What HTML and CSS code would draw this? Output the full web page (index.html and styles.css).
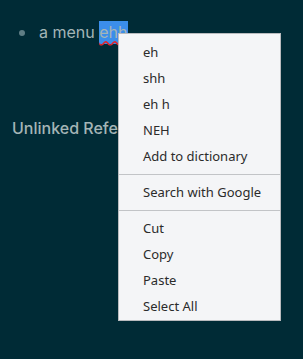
FILE: index.html
```html
<!DOCTYPE html>
<html>
<head>
<meta charset="utf-8">
<link rel="stylesheet" href="styles.css">
</head>
<body>
<div class="page">
  <ul class="blocks">
    <li class="block"><span class="bullet"></span><span class="content">a menu <span class="sel">ehh</span></span></li>
  </ul>
  <h2 class="refs">Unlinked References</h2>
</div>
<div class="menu">
  <div class="item">eh</div>
  <div class="item">shh</div>
  <div class="item">eh h</div>
  <div class="item">NEH</div>
  <div class="item">Add to dictionary</div>
  <div class="sep"></div>
  <div class="item">Search with Google</div>
  <div class="sep"></div>
  <div class="item">Cut</div>
  <div class="item">Copy</div>
  <div class="item">Paste</div>
  <div class="item">Select All</div>
</div>
</body>
</html>
```
FILE: styles.css
```css
html, body {
  margin: 0;
  padding: 0;
  background: #002b36;
  height: 100%;
  overflow: hidden;
}
.page {
  font-family: Inter, "Noto Sans", sans-serif;
  color: #a4b5b6;
  padding: 21px 0 0 12px;
}
.blocks {
  list-style: none;
  margin: 0;
  padding: 0;
}
.block {
  display: flex;
  align-items: center;
  height: 23px;
}
.bullet {
  width: 6px;
  height: 6px;
  border-radius: 50%;
  background: #5f7e85;
  margin: 0 14px 0 7px;
}
.content {
  font-size: 16px;
  line-height: 23px;
}
.sel {
  background: #3b8eea;
  display: inline-block;
  text-decoration: underline wavy #e0242c;
  text-underline-offset: 2px;
}
.refs {
  margin: 72px 0 0 0;
  font-size: 16px;
  font-weight: 500;
  line-height: 24px;
  color: #a4b5b6;
}
.menu {
  position: absolute;
  left: 118px;
  top: 33px;
  width: 161px;
  background: #f4f5f7;
  border: 1px solid #b9bbbe;
  padding: 5px 0 1px 0;
  font-family: "Noto Sans", "Open Sans", sans-serif;
  font-size: 13px;
  color: #2b2b2b;
}
.item {
  height: 26px;
  line-height: 26px;
  padding-left: 24px;
}
.sep {
  height: 1px;
  background: #c2c4c7;
  margin: 5px 0 4px 0;
}
```
